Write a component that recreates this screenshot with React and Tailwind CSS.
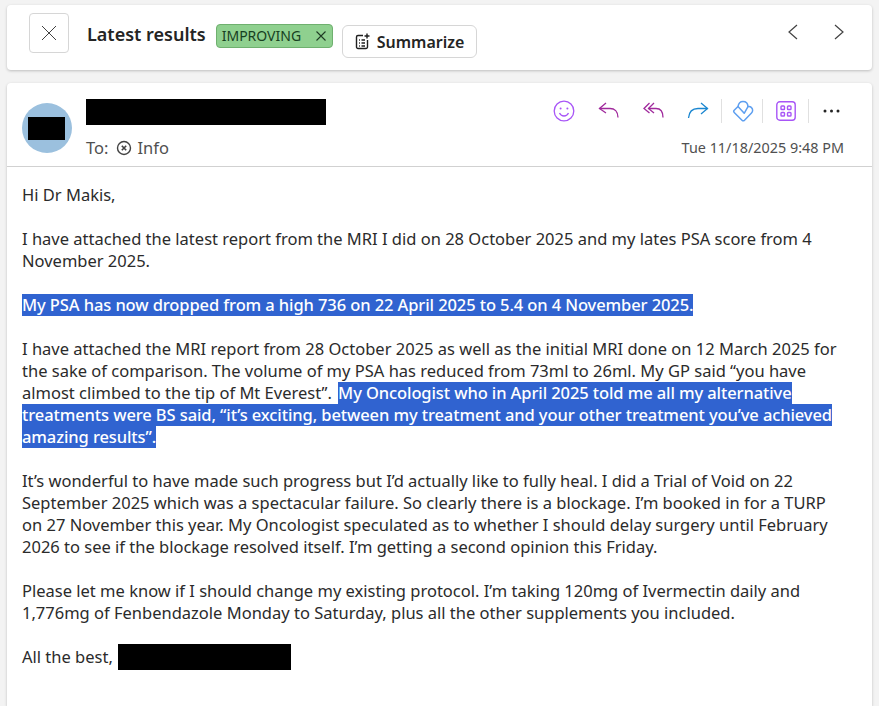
import React from "react";

const Sel = ({ children, className = "" }) => (
  <span className={"inline-block h-[22px] bg-[#3063d0] text-white font-medium tracking-[-0.1px] align-top " + className}>{children}</span>
);
const Sep = () => <div className="w-px h-6 bg-[#e0e0e0]" />;

export default function App() {
  return (
    <div className="w-[879px] h-[706px] overflow-hidden bg-[#f3f3f3] px-[7px] pt-[5px] flex flex-col gap-[13px] text-[#242424] font-['Noto_Sans','Open_Sans',sans-serif]">
      <div className="h-[65px] shrink-0 bg-white rounded-[4px] shadow-[0_1px_3px_rgba(0,0,0,0.22)] flex items-start pl-[22px] pr-[27px]">
        <button className="mt-[8px] w-10 h-10 border border-[#d6d6d6] rounded-[4px] flex items-center justify-center">
          <svg width="16" height="16" viewBox="0 0 16 16" fill="none" stroke="#424242" strokeWidth="1"><path d="M1 1l14 14M15 1L1 15" /></svg>
        </button>
        <div className="ml-[18px] mt-[17px] text-[18px] leading-[24px] font-semibold text-[#242424]">Latest results</div>
        <div className="ml-[10px] mt-[19px] w-[117px] h-[24px] bg-[#8fd08f] border border-[#6fb06f] rounded-[4px] flex items-center pl-[5px] pr-[6px] justify-between">
          <span className="text-[14px] leading-[20px] text-[#17401f]">IMPROVING</span>
          <svg width="10" height="10" viewBox="0 0 10 10" fill="none" stroke="#1f3a24" strokeWidth="1.1"><path d="M0.5 0.5l9 9M9.500 0.5l-9 9" /></svg>
        </div>
        <button className="ml-[9px] mt-[20px] w-[135px] h-[33px] bg-white border border-[#d6d6d6] rounded-[6px] flex items-center pl-[11px] gap-[6px]">
          <svg width="17" height="17" viewBox="0 0 17 17" fill="none" stroke="#1f1f1f" strokeWidth="1.4">
            <path d="M9 2.500H4a1.500 1.500 0 0 0-1.500 1.500v10A1.500 1.500 0 0 0 4 15.500h8a1.500 1.500 0 0 0 1.500-1.500V7" />
            <path d="M5 7h.9M7.500 7h3.500M5 10h.9M7.500 10h3.500M5 13h.9M7.500 13h3.500" />
            <path d="M13 .5v5M10.500 3h5" />
          </svg>
          <span className="text-[16px] leading-[22px] font-semibold text-[#242424]">Summarize</span>
        </button>
        <div className="ml-auto mt-[19px] flex items-center gap-[34px]">
          <svg width="12" height="16" viewBox="0 0 12 16" fill="none" stroke="#424242" strokeWidth="1.2"><path d="M10 1L2 8l8 7" /></svg>
          <svg width="12" height="16" viewBox="0 0 12 16" fill="none" stroke="#424242" strokeWidth="1.2"><path d="M2 1l8 7-8 7" /></svg>
        </div>
      </div>

      <div className="flex-1 bg-white rounded-t-[4px] shadow-[0_1px_3px_rgba(0,0,0,0.22)]">
        <div className="h-[84px] border-b border-[#d1d1d1] flex pl-[15px] pr-[28px]">
          <div className="relative mt-[20px] w-[50px] h-[50px] rounded-full bg-[#9bc0de] shrink-0">
            <div className="absolute left-[6px] top-[14px] w-[37px] h-[23px] bg-black" />
          </div>
          <div className="ml-[14px] flex flex-col">
            <div className="mt-[16px] w-[240px] h-[26px] bg-black" />
            <div className="mt-[12px] flex items-center text-[16.500px] leading-[22px] text-[#505050]">
              <span>To:</span>
              <svg className="ml-[8px] mr-[5px]" width="16" height="16" viewBox="0 0 16 16" fill="none" stroke="#424242" strokeWidth="1.4">
                <circle cx="8" cy="8" r="6.500" />
                <path d="M5.800 5.800l4.400 4.400M10.200 5.800l-4.400 4.400" strokeWidth="1.600" />
              </svg>
              <span>Info</span>
            </div>
          </div>
          <div className="ml-auto flex flex-col items-end">
            <div className="mt-[15px] flex items-center h-[26px] pr-[4px]">
              <svg className="mr-[23px]" width="22" height="22" viewBox="0 0 22 22" fill="none" stroke="#a855f7" strokeWidth="1.300">
                <circle cx="11" cy="11" r="9.800" />
                <circle cx="7.600" cy="8.500" r="1" fill="#a855f7" stroke="none" />
                <circle cx="14.400" cy="8.500" r="1" fill="#a855f7" stroke="none" />
                <path d="M6.500 13c1 2 2.700 3 4.500 3s3.500-1 4.500-3" />
              </svg>
              <svg className="mr-[23px]" width="22" height="18" viewBox="0 0 22 18" fill="none" stroke="#a02a9c" strokeWidth="1.300">
                <path d="M8 1L1.500 6.500 8 11" /><path d="M1.500 6.500H12c4.500 0 8 3 8 9" />
              </svg>
              <svg className="mr-[22px]" width="22" height="18" viewBox="0 0 22 18" fill="none" stroke="#a02a9c" strokeWidth="1.300">
                <path d="M6.500 1L1 6.500 6.500 11" /><path d="M11 1L5.500 6.500 11 11" /><path d="M5.500 6.500H13c4.500 0 7 3 7 9" />
              </svg>
              <svg className="mr-[12px]" width="22" height="18" viewBox="0 0 22 18" fill="none" stroke="#1a86d0" strokeWidth="1.300">
                <path d="M14 1l6.500 5.500L14 12" /><path d="M20.500 6.500H11C5.500 6.500 2 10 1.500 16" />
              </svg>
              <Sep />
              <svg className="ml-[10px] mr-[8px]" width="22" height="22" viewBox="0 0 22 22" fill="none" stroke="#5e9ff0" strokeWidth="1.500" strokeLinejoin="round" strokeLinecap="round">
                <path d="M6 6.500L2.200 10.300a1.500 1.500 0 0 0 0 2.100l7.800 7.800a1.800 1.800 0 0 0 2.500 0l7-7.200c1.500-1.600 1.500-4 0-5.400-1-1-2.300-1.300-3.500-1C15.800 3.300 13.800 1.500 11 1.500 8.500 1.500 6.500 3.500 6 6.500z" />
                <path d="M6 6.500l6.200 6.800L16 6.600" />
              </svg>
              <Sep />
              <svg className="ml-[13px] mr-[12px]" width="20" height="20" viewBox="0 0 20 20" fill="none" stroke="#a855f7" strokeWidth="1.400">
                <rect x="0.800" y="0.800" width="18.400" height="18.400" rx="3" />
                <rect x="5" y="5" width="3.500" height="3.500" rx="0.800" />
                <rect x="11.500" y="5" width="3.500" height="3.500" rx="0.800" />
                <rect x="5" y="11.500" width="3.500" height="3.500" rx="0.800" />
                <rect x="11.500" y="11.500" width="3.500" height="3.500" rx="0.800" />
              </svg>
              <Sep />
              <svg className="ml-[14px]" width="17" height="4" viewBox="0 0 17 4" fill="#242424">
                <circle cx="2" cy="2" r="1.500" /><circle cx="8.500" cy="2" r="1.500" /><circle cx="15" cy="2" r="1.500" />
              </svg>
            </div>
            <div className="mt-[14px] text-[14.400px] leading-[20px] text-[#505050]">Tue 11/18/2025 9:48 PM</div>
          </div>
        </div>

        <div className="pl-[15px] pt-[17px] text-[16.500px] leading-[22px] text-[#2b2b2b] whitespace-nowrap">
          <p>Hi Dr Makis,</p>
          <p className="mt-[22px]">I have attached the latest report from the MRI I did on 28 October 2025 and my lates PSA score from 4<br />November 2025.</p>
          <p className="mt-[22px]"><Sel>My PSA has now dropped from a high 736 on 22 April 2025 to 5.4 on 4 November 2025.</Sel></p>
          <p className="mt-[22px]">
            I have attached the MRI report from 28 October 2025 as well as the initial MRI done on 12 March 2025 for<br />
            the sake of comparison. The volume of my PSA has reduced from 73ml to 26ml. My GP said “you have<br />
            almost climbed to the tip of Mt Everest”. <Sel className="ml-[2px]">My Oncologist who in April 2025 told me all my alternative</Sel><br />
            <Sel>treatments were BS said, “it’s exciting, between my treatment and your other treatment you’ve achieved</Sel><br />
            <Sel>amazing results”.</Sel>
          </p>
          <p className="mt-[22px]">
            It’s wonderful to have made such progress but I’d actually like to fully heal. I did a Trial of Void on 22<br />
            September 2025 which was a spectacular failure. So clearly there is a blockage. I’m booked in for a TURP<br />
            on 27 November this year. My Oncologist speculated as to whether I should delay surgery until February<br />
            2026 to see if the blockage resolved itself. I’m getting a second opinion this Friday.
          </p>
          <p className="mt-[22px]">
            Please let me know if I should change my existing protocol. I’m taking 120mg of Ivermectin daily and<br />
            1,776mg of Fenbendazole Monday to Saturday, plus all the other supplements you included.
          </p>
          <p className="mt-[22px] flex items-center h-[22px]">
            <span>All the best,</span>
            <span className="ml-[5px] w-[173px] h-[26px] bg-black" />
          </p>
        </div>
      </div>
    </div>
  );
}
